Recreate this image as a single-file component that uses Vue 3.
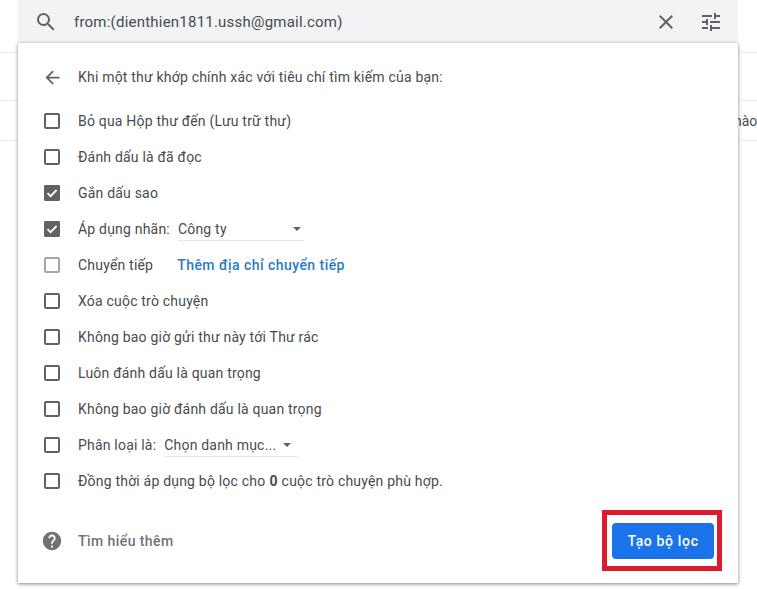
<template>
  <div class="page">
    <!-- mail list behind the search popup -->
    <div class="mail-list">
      <div class="mail-row mail-top"></div>
      <div class="mail-row mail-mid"></div>
      <div class="mail-row mail-text"><span>nào</span></div>
    </div>

    <div class="search-popup">
      <div class="search-bar">
        <svg class="search-icon" viewBox="0 0 24 24" width="24" height="24">
          <path fill="#5f6368" d="M15.5 14h-.79l-.28-.27A6.47 6.47 0 0 0 16 9.5 6.5 6.5 0 1 0 9.5 16c1.61 0 3.09-.59 4.23-1.57l.27.28v.79l5 4.99L20.49 19l-4.99-5zm-6 0C7.01 14 5 11.99 5 9.5S7.01 5 9.5 5 14 7.01 14 9.5 11.99 14 9.5 14z" />
        </svg>
        <span class="query">from:(dienthien1811.ussh@gmail.com)</span>
        <svg class="close-icon" viewBox="0 0 24 24" width="24" height="24">
          <path fill="#5f6368" d="M19 6.41 17.59 5 12 10.59 6.41 5 5 6.41 10.59 12 5 17.59 6.41 19 12 13.41 17.59 19 19 17.59 13.41 12z" />
        </svg>
        <svg class="tune-icon" viewBox="0 0 24 24" width="24" height="24">
          <path fill="#5f6368" d="M3 17v2h6v-2H3zM3 5v2h10V5H3zm10 16v-2h8v-2h-8v-2h-2v6h2zM7 9v2H3v2h4v2h2V9H7zm14 4v-2H11v2h10zm-6-4h2V7h4V5h-4V3h-2v6z" />
        </svg>
      </div>

      <div class="panel">
        <div class="panel-head">
          <svg class="back-icon" viewBox="0 0 24 24" width="21" height="21">
            <path fill="#5f6368" d="M20 11H7.83l5.59-5.59L12 4l-8 8 8 8 1.41-1.41L7.83 13H20v-2z" />
          </svg>
          <span>Khi một thư khớp chính xác với tiêu chí tìm kiếm của bạn:</span>
        </div>

        <div class="options">
          <div v-for="opt in options" :key="opt.label" class="option">
            <span class="box" :class="{ checked: opt.checked, faded: opt.faded }">
              <svg v-if="opt.checked" viewBox="0 0 16 16" width="16" height="16">
                <path d="M3.5 8.2 6.6 11.2 12.6 5" fill="none" stroke="#fff" stroke-width="1.8" />
              </svg>
            </span>
            <span class="label">{{ opt.label }}</span>
            <b v-if="opt.count !== undefined" class="count">{{ opt.count }}</b>
            <span v-if="opt.after" class="label">{{ opt.after }}</span>
            <span v-if="opt.select" class="select" :style="{ width: opt.select.width + 'px', paddingRight: opt.select.pad + 'px' }">
              <span>{{ opt.select.value }}</span>
              <i class="caret"></i>
            </span>
            <a v-if="opt.link" class="link">{{ opt.link }}</a>
          </div>
        </div>

        <div class="panel-foot">
          <svg class="help-icon" viewBox="0 0 24 24" width="22" height="22">
            <path fill="#6f7276" d="M12 2C6.48 2 2 6.48 2 12s4.48 10 10 10 10-4.48 10-10S17.52 2 12 2zm1 17h-2v-2h2v2zm2.07-7.75-.9.92C13.45 12.9 13 13.5 13 15h-2v-.5c0-1.1.45-2.1 1.17-2.83l1.24-1.26c.37-.36.59-.86.59-1.41 0-1.1-.9-2-2-2s-2 .9-2 2H8c0-2.21 1.79-4 4-4s4 1.79 4 4c0 .88-.36 1.68-.93 2.25z" />
          </svg>
          <span class="learn">Tìm hiểu thêm</span>
          <div class="create-wrap">
            <button class="create">Tạo bộ lọc</button>
          </div>
        </div>
      </div>
    </div>
  </div>
</template>

<script setup>
const options = [
  { label: 'Bỏ qua Hộp thư đến (Lưu trữ thư)' },
  { label: 'Đánh dấu là đã đọc' },
  { label: 'Gắn dấu sao', checked: true },
  { label: 'Áp dụng nhãn:', checked: true, select: { value: 'Công ty', width: 126, pad: 3 } },
  { label: 'Chuyển tiếp', faded: true, link: 'Thêm địa chỉ chuyển tiếp' },
  { label: 'Xóa cuộc trò chuyện' },
  { label: 'Không bao giờ gửi thư này tới Thư rác' },
  { label: 'Luôn đánh dấu là quan trọng' },
  { label: 'Không bao giờ đánh dấu là quan trọng' },
  { label: 'Phân loại là:', select: { value: 'Chọn danh mục...', width: 134, pad: 7 } },
  { label: 'Đồng thời áp dụng bộ lọc cho', count: 0, after: 'cuộc trò chuyện phù hợp.' }
]
</script>

<style>
html,
body {
  margin: 0;
  background: #fff;
  overflow: hidden;
}
</style>

<style scoped>
.page {
  position: relative;
  width: 757px;
  height: 589px;
  overflow: hidden;
  background: #fff;
  font-family: Roboto, "Liberation Sans", sans-serif;
  color: #484b4e;
}

.mail-list {
  display: flex;
  flex-direction: column;
}

.mail-row {
  border-bottom: 1px solid #eceef0;
  box-sizing: border-box;
}

.mail-top {
  height: 53px;
}

.mail-mid {
  height: 48px;
}

.mail-text {
  height: 40px;
  display: flex;
  align-items: center;
  padding-left: 734px;
  font-size: 14px;
  white-space: nowrap;
}

/* floats over the mail list */
.search-popup {
  position: absolute;
  top: 0;
  left: 18px;
  width: 720px;
}

.search-bar {
  height: 43px;
  background: #f1f3f4;
  display: flex;
  align-items: center;
  padding-left: 16px;
  padding-right: 15px;
  box-sizing: border-box;
}

.search-icon {
  flex: none;
}

.query {
  margin-left: 16px;
  font-size: 15px;
  letter-spacing: 0.22px;
  flex: 1;
  white-space: nowrap;
}

.close-icon {
  margin-right: 21px;
  margin-left: -1px;
  flex: none;
}

.tune-icon {
  flex: none;
}

.panel {
  height: 540px;
  background: #fff;
  box-sizing: border-box;
  box-shadow: 0 1px 3px rgba(60, 64, 67, 0.5), 0 1px 5px rgba(60, 64, 67, 0.2);
  display: flex;
  flex-direction: column;
}

.panel-head {
  height: 68px;
  display: flex;
  align-items: center;
  padding-left: 24px;
  font-size: 14px;
  letter-spacing: 0.2px;
}

.panel-head span {
  margin-left: 15px;
}

.options {
  display: flex;
  flex-direction: column;
  margin-top: -8px;
}

.option {
  height: 36px;
  display: flex;
  align-items: center;
  padding-left: 26px;
  font-size: 14px;
  letter-spacing: 0.2px;
  white-space: nowrap;
}

.box {
  width: 16px;
  height: 16px;
  flex: none;
  border-radius: 2px;
  box-shadow: inset 0 0 0 2px #5f6368;
  margin-right: 18px;
  display: flex;
}

.box.checked {
  background: #5f6368;
}

.box.faded {
  box-shadow: inset 0 0 0 2px #a5a7aa;
}

.count {
  font-weight: 700;
  margin: 0 4px 0 4px;
}

.select {
  margin-left: 8px;
  height: 24px;
  box-sizing: border-box;
  border-bottom: 1px solid #e6e7e9;
  display: flex;
  align-items: center;
  justify-content: space-between;
}

.caret {
  width: 0;
  height: 0;
  border-left: 4.5px solid transparent;
  border-right: 4.5px solid transparent;
  border-top: 4.5px solid #5f6368;
}

.link {
  margin-left: 24px;
  color: #2a7bc4;
  font-weight: 500;
  letter-spacing: 0.45px;
}

.panel-foot {
  display: flex;
  align-items: center;
  padding-left: 23px;
  padding-right: 16px;
  margin-top: 11px;
}

.learn {
  margin-left: 15px;
  font-size: 14px;
  font-weight: 500;
  letter-spacing: 0.42px;
  color: #6f7276;
}

.create-wrap {
  margin-left: auto;
  border: 5px solid #dc1c2e;
  padding: 8px 3px 7px 5px;
}

.create {
  display: block;
  width: 102px;
  height: 36px;
  border: 0;
  border-radius: 4px;
  background: #1a73e8;
  color: #fff;
  font-family: inherit;
  font-size: 14px;
  font-weight: 500;
  letter-spacing: 0.65px;
  padding: 0;
}
</style>
